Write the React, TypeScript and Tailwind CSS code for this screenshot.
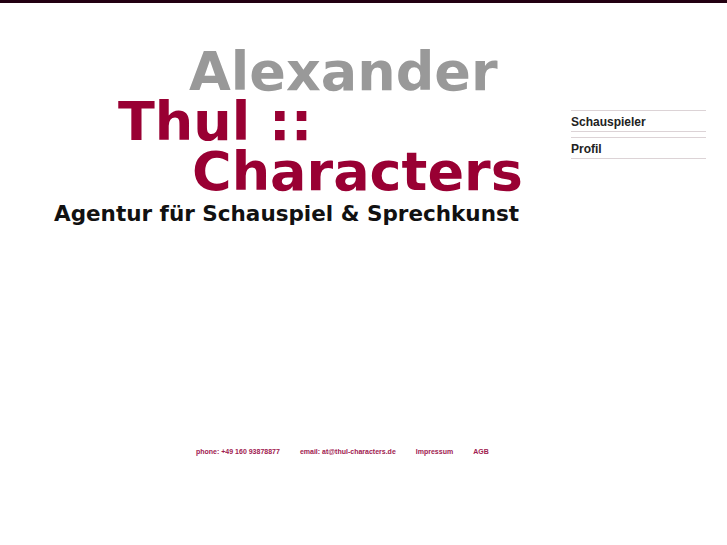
export default function App() {
  return (
    <div className="min-h-screen bg-white" style={{ fontFamily: '"Liberation Sans", Arial, sans-serif' }}>
      <div className="h-[3px] bg-[#220011]" />
      <div className="flex">
        <div className="w-[571px] shrink-0 pt-[44px] font-['DejaVu_Sans',Verdana,sans-serif] font-bold">
          <div className="text-[54px] leading-[50px] text-[#999999] pl-[189px]">Alexander</div>
          <div className="text-[54px] leading-[50px] text-[#990033] pl-[118px]">Thul ::</div>
          <div className="text-[54px] leading-[50px] text-[#990033] pl-[192px]">Characters</div>
          <div className="mt-[3px] text-[21.5px] leading-[28px] text-[#111111] pl-[54px]">Agentur für Schauspiel &amp; Sprechkunst</div>
        </div>
        <nav className="w-[135px] pt-[107px] text-[12px] font-bold text-[#222222]">
          <div className="border-t border-b border-[#dcd3d6] pt-[4px] pb-[2px] leading-[14px]">Schauspieler</div>
          <div className="mt-[5px] border-t border-b border-[#dcd3d6] pt-[4px] pb-[2px] leading-[14px]">Profil</div>
        </nav>
      </div>
      <footer className="mt-[219px] pl-[196px] flex gap-[20px] text-[7px] leading-[9px] font-bold text-[#a0204f]">
        <span>phone: +49 160 93878877</span>
        <span>email: at@thul-characters.de</span>
        <span>Impressum</span>
        <span>AGB</span>
      </footer>
    </div>
  );
}
